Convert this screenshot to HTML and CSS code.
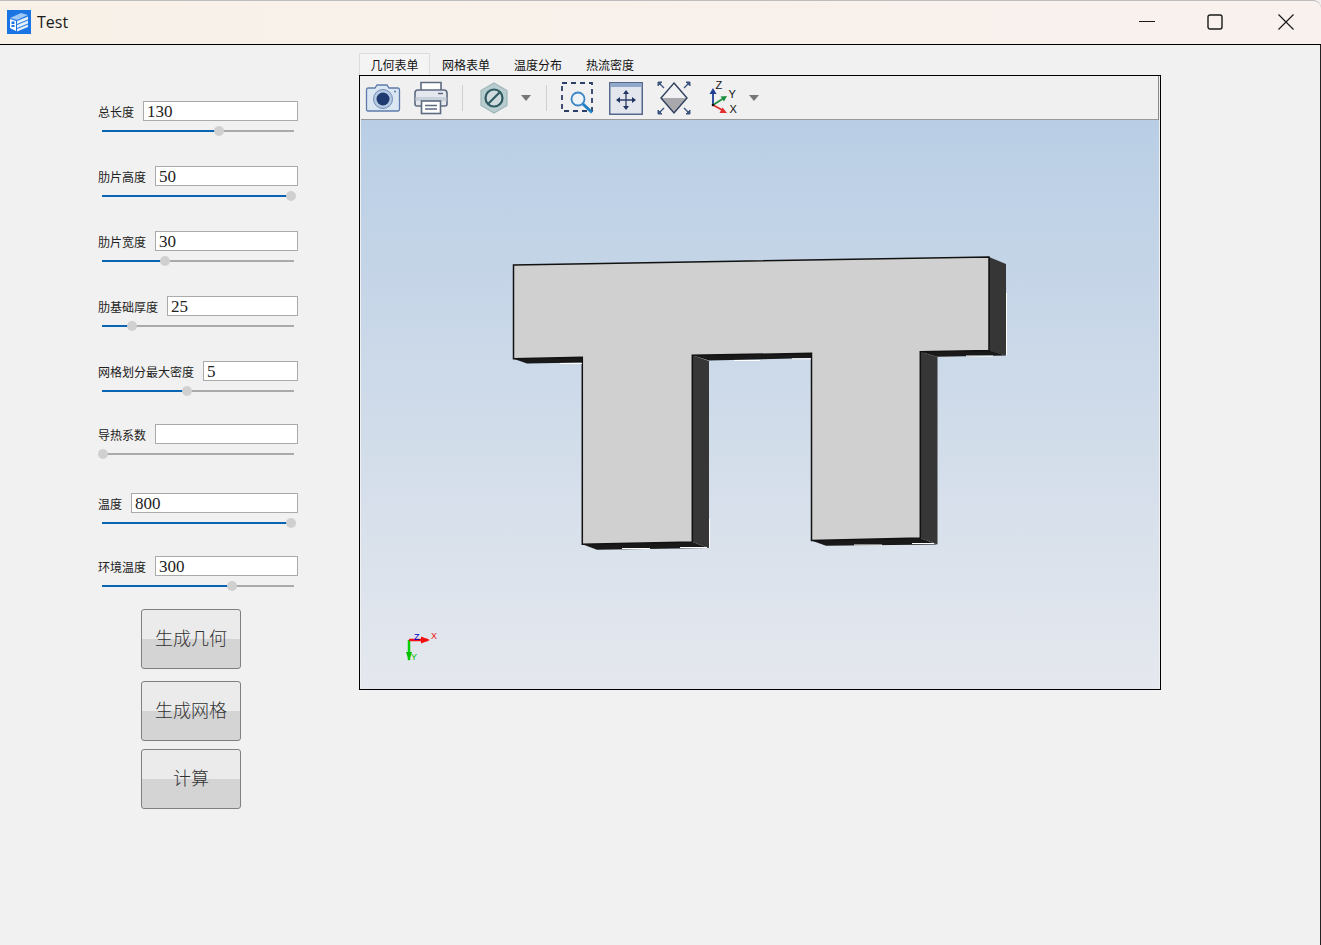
FILE: index.html
```html
<!DOCTYPE html>
<html lang="zh">
<head>
<meta charset="utf-8">
<title>Test</title>
<link rel="stylesheet" href="styles.css">
</head>
<body>
<div class="window">
  <header class="titlebar">
    <svg class="app-icon" viewBox="0 0 24 24">
      <rect width="24" height="24" fill="#1b74e4"/>
      <path d="M3 8 L14 3 L21 5 L10 10 Z" fill="#9cc7f7"/>
      <path d="M3 9 L9 11 V21 L3 18 Z" fill="#fff"/>
      <path d="M10 11 L21 6.5 V9.5 L10 14 Z M10 15 L21 10.5 V13.5 L10 18 Z M10 19 L21 14.5 V17 L10 21.5 Z" fill="#e4effc"/>
      <path d="M4.5 11.5 H7.5 V14 H4.5 Z M4.5 15 H7.5 V17 H4.5 Z" fill="#1b74e4"/>
    </svg>
    <span class="app-title">Test</span>
    <div class="caption">
      <svg class="cap cap-min" viewBox="0 0 16 16"><path d="M0 7.5 H16" stroke="#1a1a1a" fill="none"/></svg>
      <svg class="cap cap-max" viewBox="0 0 16 16"><rect x="1" y="1" width="14" height="14" rx="2" stroke="#1a1a1a" stroke-width="1.4" fill="none"/></svg>
      <svg class="cap cap-close" viewBox="0 0 16 16"><path d="M.5 .5 L15.5 15.5 M15.5 .5 L.5 15.5" stroke="#1a1a1a" stroke-width="1.2" fill="none"/></svg>
    </div>
  </header>

  <main class="content">
    <aside class="form">
      <div class="row">
        <div class="field"><label class="label">总长度</label><input class="input" value="130"></div>
        <div class="slider"><div class="fill" style="width:117px"><span class="thumb"></span></div></div>
      </div>
      <div class="row">
        <div class="field"><label class="label">肋片高度</label><input class="input" value="50"></div>
        <div class="slider"><div class="fill" style="width:189px"><span class="thumb"></span></div></div>
      </div>
      <div class="row">
        <div class="field"><label class="label">肋片宽度</label><input class="input" value="30"></div>
        <div class="slider"><div class="fill" style="width:63px"><span class="thumb"></span></div></div>
      </div>
      <div class="row">
        <div class="field"><label class="label">肋基础厚度</label><input class="input" value="25"></div>
        <div class="slider"><div class="fill" style="width:30px"><span class="thumb"></span></div></div>
      </div>
      <div class="row">
        <div class="field"><label class="label">网格划分最大密度</label><input class="input" value="5"></div>
        <div class="slider"><div class="fill" style="width:85px"><span class="thumb"></span></div></div>
      </div>
      <div class="row row-tight">
        <div class="field"><label class="label">导热系数</label><input class="input" value=""></div>
        <div class="slider"><div class="fill" style="width:1px"><span class="thumb"></span></div></div>
      </div>
      <div class="row row-loose">
        <div class="field"><label class="label">温度</label><input class="input" value="800"></div>
        <div class="slider"><div class="fill" style="width:189px"><span class="thumb"></span></div></div>
      </div>
      <div class="row row-tight">
        <div class="field"><label class="label">环境温度</label><input class="input" value="300"></div>
        <div class="slider"><div class="fill" style="width:130px"><span class="thumb"></span></div></div>
      </div>
      <button class="action action-first">生成几何</button>
      <button class="action action-second">生成网格</button>
      <button class="action action-third">计算</button>
    </aside>

    <section class="workspace">
      <nav class="tabs">
        <span class="tab tab-active">几何表单</span>
        <span class="tab">网格表单</span>
        <span class="tab">温度分布</span>
        <span class="tab">热流密度</span>
      </nav>
      <div class="panel">
        <div class="toolbar">
          <svg class="tool tool-camera" viewBox="0 0 34 28">
            <path d="M2 4 H9 L11 1 H21 L23 4 H32 Q33.500 4 33.500 6 V25 Q33.500 27 32 27 H2 Q.5 27 .5 25 V6 Q.5 4 2 4 Z" fill="#dbe6f3" stroke="#5d7bab" stroke-width="1.300"/>
            <circle cx="17" cy="15" r="9.500" fill="#b6cbe3" stroke="#6f8db8"/>
            <circle cx="17" cy="15" r="6.500" fill="#1f3a6e"/>
            <circle cx="29" cy="7.500" r="1" fill="#5d7bab"/>
          </svg>
          <svg class="tool tool-printer" viewBox="0 0 34 34">
            <path d="M7 9 V1.500 H27 V9" fill="#fff" stroke="#5c6b80" stroke-width="1.600"/>
            <path d="M7 25 H3 Q1 25 1 23 V12 Q1 9 4 9 H30 Q33 9 33 12 V23 Q33 25 31 25 H27" fill="#e4e8ee" stroke="#5c6b80" stroke-width="1.600"/>
            <path d="M1.500 16 H32.500 V20 H1.500 Z" fill="#c8d0da"/>
            <rect x="7.500" y="20" width="19" height="12.500" fill="#fff" stroke="#5c6b80" stroke-width="1.600"/>
            <path d="M11 24.500 H23 M11 28 H23" stroke="#5c6b80" stroke-width="1.400"/>
            <path d="M24 12.500 H29" stroke="#5c6b80" stroke-width="1.500"/>
          </svg>
          <span class="sep sep-a"></span>
          <svg class="tool tool-hex" viewBox="0 0 28 32">
            <path d="M14 1 L27 8.500 V23.500 L14 31 L1 23.500 V8.500 Z" fill="#b7cdcf" stroke="#9fb6ba" stroke-width="1.200"/>
            <circle cx="14" cy="16" r="8.500" fill="#cfdcdd" stroke="#2f5a62" stroke-width="2.200"/>
            <path d="M8 22 L20 10" stroke="#2f5a62" stroke-width="2.200"/>
          </svg>
          <span class="caret caret-a"></span>
          <span class="sep sep-b"></span>
          <svg class="tool tool-zoom" viewBox="0 0 33 32">
            <rect x="1" y="1" width="30" height="28" fill="none" stroke="#2c3f66" stroke-width="1.800" stroke-dasharray="5 4"/>
            <circle cx="17" cy="17" r="6.500" fill="#eef3f8" stroke="#3c86c6" stroke-width="1.800"/>
            <path d="M22 22 L31 30.500" stroke="#1f7fc4" stroke-width="3"/>
          </svg>
          <svg class="tool tool-window" viewBox="0 0 34 33">
            <rect x=".75" y=".75" width="32.500" height="31.500" fill="#e3e6ec" stroke="#55688c" stroke-width="1.500"/>
            <rect x="1.500" y="1.500" width="31" height="3.500" fill="#8fa9cc"/>
            <path d="M17 10 V26 M9 18 H25" stroke="#2c3f66" stroke-width="1.300"/>
            <path d="M17 8 L20 12 H14 Z M17 28 L14 24 H20 Z M7 18 L11 15 V21 Z M27 18 L23 21 V15 Z" fill="#1f3560"/>
          </svg>
          <svg class="tool tool-fit" viewBox="0 0 34 34">
            <path d="M17 2 L30 17 H4 Z" fill="#f1f1f3"/>
            <path d="M4 17 H30 L17 32 Z" fill="#a9a9ad"/>
            <path d="M17 2 L30 17 L17 32 L4 17 Z" fill="none" stroke="#2f3f5f" stroke-width="1.400"/>
            <path d="M2 2 L7 7 M32 2 L27 7 M2 32 L7 27 M32 32 L27 27" stroke="#3d5580" stroke-width="1.400"/>
            <path d="M1 1 H5 L1 5 Z M33 1 H29 L33 5 Z M1 33 H5 L1 29 Z M33 33 H29 L33 29 Z" fill="#3d5580" stroke="#3d5580"/>
          </svg>
          <svg class="tool tool-axes" viewBox="0 0 30 36">
            <path d="M3 25 V11" stroke="#1f3f96" stroke-width="1.800"/>
            <path d="M3 8 L6.500 14 H-.5 Z" fill="#1f3f96"/>
            <path d="M3 25 L14 18" stroke="#1f9040" stroke-width="1.800"/>
            <path d="M17 16 L14 21.500 L10.500 16.500 Z" fill="#1f9040"/>
            <path d="M3 25 L14 31" stroke="#e03030" stroke-width="1.800"/>
            <path d="M17 33 L9.500 33 L12.500 27.500 Z" fill="#e03030"/>
            <circle cx="3" cy="25" r="1.300" fill="#111"/>
            <text class="axis-letter" x="5.500" y="9">Z</text>
            <text class="axis-letter" x="18.500" y="18">Y</text>
            <text class="axis-letter" x="19.500" y="33">X</text>
          </svg>
          <span class="caret caret-b"></span>
        </div>
        <div class="viewport">
          <svg class="scene" viewBox="361 120 798 569">
            <!-- dark side walls -->
            <path d="M989 257 L1006 264 V355.500 L989 351 Z" fill="#363636"/>
            <path d="M692.300 355.300 L709 361 V548 L692.300 542 Z" fill="#363636"/>
            <path d="M920.300 351.700 L937.500 357 V544.500 L920.300 538 Z" fill="#363636"/>
            <!-- undersides -->
            <path d="M513.500 358.700 L527 363.500 L583 362.500 V357 Z" fill="#191919"/>
            <path d="M692.300 355.300 L709 360.500 L812 358 V353 Z" fill="#191919"/>
            <path d="M920.300 351.700 L937 356.800 L1006 355.500 L989 350.500 Z" fill="#191919"/>
            <path d="M582.300 544.300 L597 549.800 L709 548 L692.300 542 Z" fill="#191919"/>
            <path d="M811.300 540.600 L826 545.800 L937 544.500 L920.300 538 Z" fill="#191919"/>
            <!-- front face -->
            <path class="face" d="M513.500 265 L989 257 V350.500 L920.300 351.700 V538 L811.500 540.600 V353.300 L692.300 355.300 V542 L582.300 544.300 V357.300 L513.500 358.700 Z"/>
            <!-- slivers -->
            <path class="sliver" d="M1006.500 293 V355.500 M709.500 519 V548 M560 363.500 H582 M734 360.500 H760 M792 358.800 H811 M966 356 H993 M622 548.500 H650 M680 547.500 H707 M854 545 H882 M912 543.500 H934"/>
            <!-- triad -->
            <path d="M409 640 V660" stroke="#00d000" stroke-width="2.500"/>
            <path d="M409 661 L406 652 H412 Z" fill="#00c000"/>
            <path d="M409 640 H428" stroke="#f01010" stroke-width="2.500"/>
            <path d="M430 640 L421 636.500 V643.500 Z" fill="#f01010"/>
            <text class="triad triad-z" x="414" y="640">Z</text>
            <text class="triad triad-x" x="431" y="639">X</text>
            <text class="triad triad-y" x="411" y="660">Y</text>
          </svg>
        </div>
      </div>
    </section>
  </main>
</div>
</body>
</html>
```

FILE: styles.css
```css
* { box-sizing: border-box; }

html, body {
  margin: 0;
  height: 945px;
  overflow: hidden;
  background: #f1f1f1;
}

.window {
  display: flex;
  flex-direction: column;
  height: 945px;
  font-family: "Noto Sans CJK SC", "Noto Sans", sans-serif;
}

.titlebar {
  display: flex;
  align-items: center;
  flex: none;
  height: 45px;
  padding: 0 0 2px 7px;
  background: linear-gradient(90deg, #f8f1e8, #f9f1ee);
  border-top: 1px solid #bdbdbd;
  border-bottom: 1px solid #000;
  border-top-right-radius: 8px;
}

.app-icon { width: 24px; height: 24px; flex: none; }

.app-title {
  margin-left: 6px;
  font: 16px "Open Sans", "Noto Sans", sans-serif;
  color: #1a1a1a;
}

.caption {
  display: flex;
  align-items: center;
  margin-left: auto;
  padding-right: 27px;
}

.cap { width: 16px; height: 16px; display: block; }
.cap-max { margin-left: 52px; }
.cap-close { margin-left: 55px; }

.content {
  display: flex;
  flex: 1;
  padding-left: 98px;
  border-right: 1px solid #222;
}

.form {
  display: flex;
  flex-direction: column;
  flex: none;
  width: 200px;
  padding-top: 26px;
}

.row { margin-top: 30px; }
.row-tight { margin-top: 28px; }
.row-loose { margin-top: 34px; }

.field { display: flex; align-items: center; height: 20px; }

.label {
  flex: none;
  margin-right: 9px;
  padding-top: 1px;
  font-size: 12px;
  line-height: 20px;
  color: #222;
}

.input {
  flex: 1;
  min-width: 0;
  height: 20px;
  padding: 2px 0 0 3px;
  font: 17px "Liberation Serif", serif;
  color: #222;
  background: #fff;
  border: 1px solid #aaa;
  border-radius: 0;
  outline: none;
}

.slider {
  position: relative;
  width: 192px;
  height: 2px;
  margin: 9px 0 4px 4px;
  background: #aaa;
}

.fill { position: relative; height: 2px; background: #0a64b4; }

.thumb {
  position: absolute;
  top: -4px;
  right: -5px;
  width: 10px;
  height: 10px;
  border-radius: 50%;
  background: #d0d0d0;
}

.action {
  flex: none;
  width: 100px;
  height: 60px;
  margin-left: 43px;
  padding: 0 0 4px;
  font-family: "Noto Sans CJK SC", sans-serif;
  font-size: 18px;
  font-weight: 300;
  color: #333;
  background: linear-gradient(#ebebeb 50%, #d4d4d4 50%);
  border: 1px solid #808080;
  border-radius: 3px;
}

.action-first { margin-top: 18px; }
.action-second { margin-top: 12px; }
.action-third { margin-top: 8px; }

.workspace {
  flex: none;
  width: 802px;
  margin-left: 61px;
  padding-top: 8px;
}

.tabs { display: flex; height: 22px; }

.tab {
  width: 72px;
  padding-top: 2px;
  font-size: 12px;
  line-height: 19px;
  color: #111;
  text-align: center;
}

.tab-active {
  width: 71px;
  background: #f4f4f4;
  border: 1px solid #dcdcdc;
  border-bottom: none;
  padding-top: 1px;
}

.panel {
  display: flex;
  flex-direction: column;
  height: 615px;
  padding: 0 1px 0 1px;
  background: #f0f0f0;
  border: 1px solid #000;
}

.toolbar {
  display: flex;
  align-items: center;
  flex: none;
  height: 44px;
  padding-top: 1px;
  background: #f0f0f0;
  border-bottom: 1px solid #999;
  border-right: 1px solid #888;
}

.tool { display: block; flex: none; overflow: visible; }
.tool-camera { width: 34px; height: 28px; margin-left: 5px; }
.tool-printer { width: 34px; height: 34px; margin-left: 14px; }
.sep { flex: none; width: 1px; height: 26px; background: #d0d0d0; }
.sep-a { margin-left: 14px; }
.tool-hex { width: 28px; height: 32px; margin-left: 17px; }
.caret {
  flex: none;
  width: 0;
  height: 0;
  border-left: 5px solid transparent;
  border-right: 5px solid transparent;
  border-top: 6px solid #777;
}
.caret-a { margin-left: 13px; }
.sep-b { margin-left: 15px; }
.tool-zoom { width: 33px; height: 32px; margin-left: 14px; }
.tool-window { width: 34px; height: 33px; margin-left: 15px; }
.tool-fit { width: 34px; height: 34px; margin-left: 14px; }
.tool-axes { width: 30px; height: 36px; margin-left: 19px; }
.caret-b { margin-left: 9px; }

.axis-letter { font: 11px "Liberation Sans", sans-serif; fill: #111; }

.viewport {
  flex: 1;
  min-height: 0;
  background: linear-gradient(#b9cee5, #e5e8ee);
}

.scene { display: block; width: 798px; height: 569px; }

.face { fill: #d0d0d0; stroke: #111; stroke-width: 1.500; }

.sliver { fill: none; stroke: #fff; stroke-width: 1; }

.triad { font: 9px "Liberation Sans", sans-serif; }
.triad-z { fill: #0000d0; }
.triad-x { fill: #f01010; }
.triad-y { fill: #00c000; }
```
